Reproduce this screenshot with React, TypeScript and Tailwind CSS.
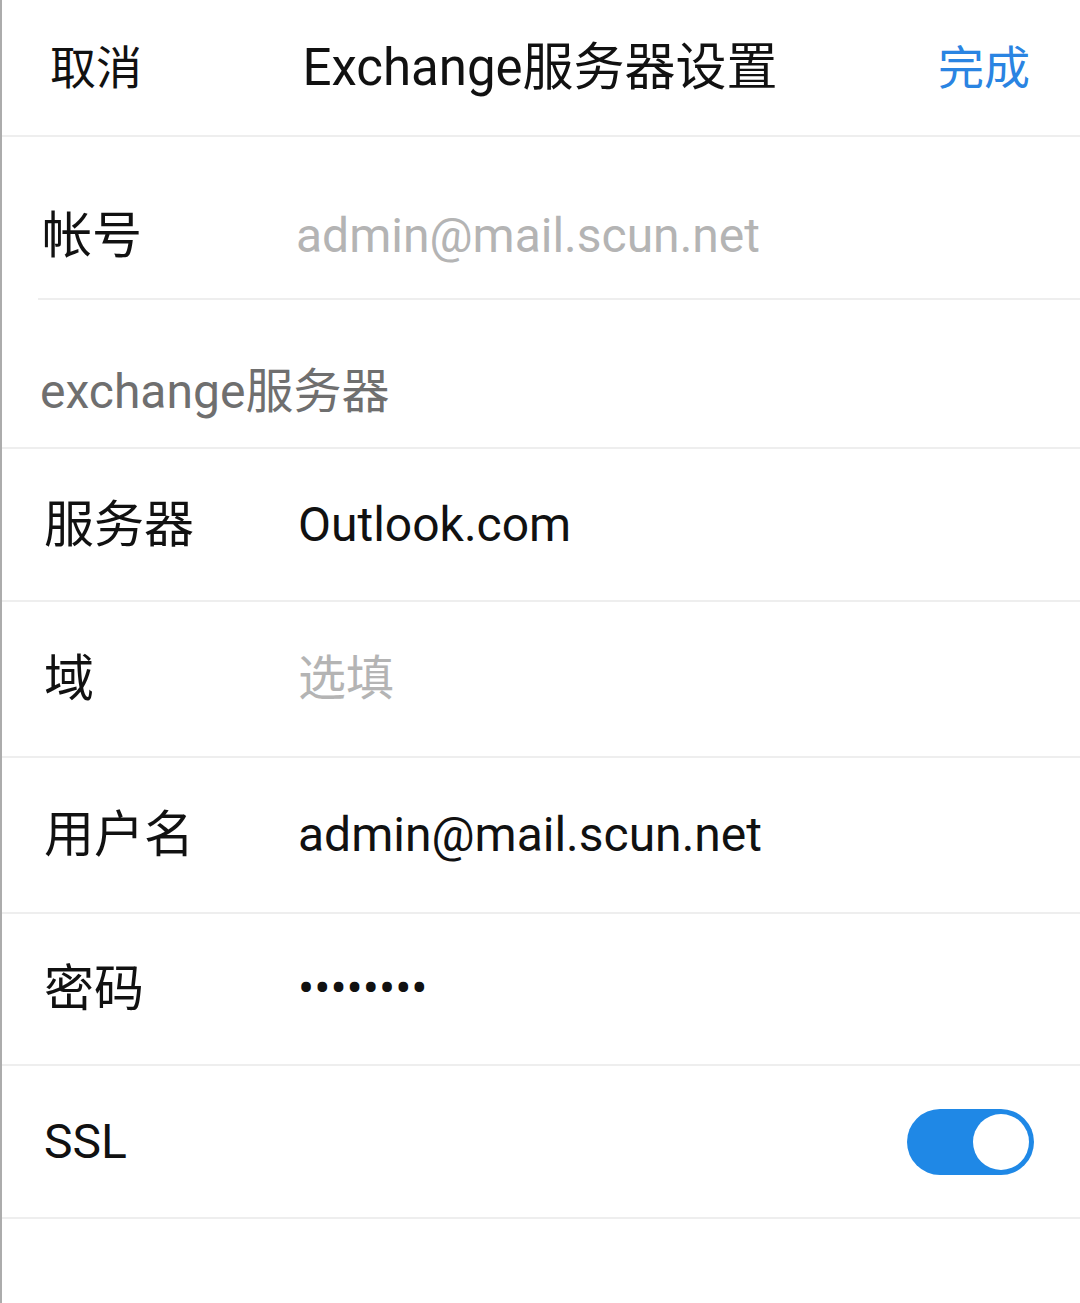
import { useState } from "react"

const font = { fontFamily: 'Roboto, "Noto Sans CJK SC", sans-serif' }

interface FieldRowProps {
  label: string
  value: string
  placeholder?: boolean
  height: string
}

function FieldRow({ label, value, placeholder, height }: FieldRowProps) {
  return (
    <div className={`flex items-center border-b-2 border-[#eeeeee] pl-[42px] ${height}`}>
      <div className="w-[254px] shrink-0 text-[50px] leading-none text-[#111111]">{label}</div>
      <div className={`text-[48px] leading-none ${placeholder ? "text-[#b4b4b4]" : "text-[#111111]"}`}>
        {value}
      </div>
    </div>
  )
}

export default function App() {
  const [ssl, setSsl] = useState(true)

  return (
    <div className="min-h-[1303px] w-[1080px] border-l-2 border-[#acacac] bg-white" style={font}>
      {/* top bar */}
      <div className="flex h-[137px] items-center justify-between border-b-2 border-[#eeeeee] pl-[48px] pr-[50px]">
        <button className="text-[46px] leading-none text-[#111111]">取消</button>
        <div className="text-[51px] leading-none text-[#111111]">Exchange服务器设置</div>
        <button className="text-[46px] leading-none text-[#2a84e2]">完成</button>
      </div>

      <div className="pl-[36px]">
        <div className="flex h-[163px] items-center border-b-2 border-[#eeeeee] pl-[4px] pt-[36px]">
          <div className="w-[254px] shrink-0 text-[50px] leading-none text-[#111111]">帐号</div>
          <div className="text-[48px] leading-none text-[#b4b4b4]">admin@mail.scun.net</div>
        </div>
      </div>

      <div className="flex h-[149px] items-center border-b-2 border-[#eeeeee] pl-[38px] pt-[36px]">
        <div className="text-[48px] leading-none text-[#6f6f6f]">exchange服务器</div>
      </div>

      <FieldRow label="服务器" value="Outlook.com" height="h-[153px]" />
      <FieldRow label="域" value="选填" placeholder height="h-[156px]" />
      <FieldRow label="用户名" value="admin@mail.scun.net" height="h-[156px]" />
      <FieldRow label="密码" value="••••••••" height="h-[152px]" />

      <div className="flex h-[153px] items-center justify-between border-b-2 border-[#eeeeee] pl-[42px] pr-[46px]">
        <div className="text-[48px] leading-none text-[#111111]">SSL</div>
        <button
          onClick={() => setSsl(!ssl)}
          className={`flex h-[66px] w-[127px] items-center rounded-full p-[5px] ${
            ssl ? "justify-end bg-[#1f88e6]" : "justify-start bg-[#cccccc]"
          }`}
        >
          <span className="h-[56px] w-[56px] rounded-full bg-white" />
        </button>
      </div>
    </div>
  )
}
